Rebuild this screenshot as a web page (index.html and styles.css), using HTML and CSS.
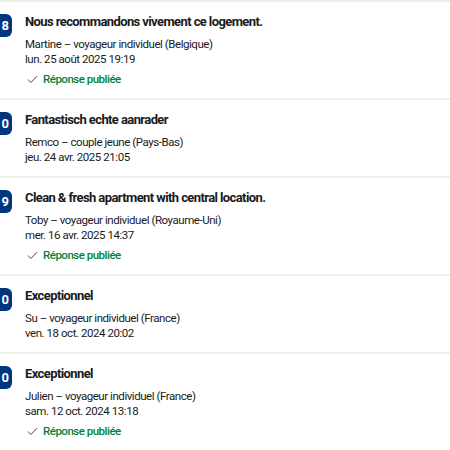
FILE: index.html
```html
<!DOCTYPE html>
<html lang="fr">
<head>
<meta charset="utf-8">
<link rel="stylesheet" href="styles.css">
</head>
<body>
<ul class="reviews">
  <li class="review">
    <div class="score">8</div>
    <div class="body">
      <h3 class="title">Nous recommandons vivement ce logement.</h3>
      <p class="meta">Martine – voyageur individuel (Belgique)</p>
      <p class="meta">lun. 25 août 2025 19:19</p>
      <p class="reply"><svg class="check" viewBox="0 0 11 9" width="11" height="9"><polyline points="1,4.5 4,7.5 10,1.2" fill="none" stroke="#474747" stroke-width="1"/></svg><span>Réponse publiée</span></p>
    </div>
  </li>
  <li class="review">
    <div class="score">10</div>
    <div class="body">
      <h3 class="title">Fantastisch echte aanrader</h3>
      <p class="meta">Remco – couple jeune (Pays-Bas)</p>
      <p class="meta">jeu. 24 avr. 2025 21:05</p>
    </div>
  </li>
  <li class="review">
    <div class="score">9</div>
    <div class="body">
      <h3 class="title">Clean &amp; fresh apartment with central location.</h3>
      <p class="meta">Toby – voyageur individuel (Royaume-Uni)</p>
      <p class="meta">mer. 16 avr. 2025 14:37</p>
      <p class="reply"><svg class="check" viewBox="0 0 11 9" width="11" height="9"><polyline points="1,4.5 4,7.5 10,1.2" fill="none" stroke="#474747" stroke-width="1"/></svg><span>Réponse publiée</span></p>
    </div>
  </li>
  <li class="review">
    <div class="score">10</div>
    <div class="body">
      <h3 class="title">Exceptionnel</h3>
      <p class="meta">Su – voyageur individuel (France)</p>
      <p class="meta">ven. 18 oct. 2024 20:02</p>
    </div>
  </li>
  <li class="review">
    <div class="score">10</div>
    <div class="body">
      <h3 class="title">Exceptionnel</h3>
      <p class="meta">Julien – voyageur individuel (France)</p>
      <p class="meta">sam. 12 oct. 2024 13:18</p>
      <p class="reply"><svg class="check" viewBox="0 0 11 9" width="11" height="9"><polyline points="1,4.5 4,7.5 10,1.2" fill="none" stroke="#474747" stroke-width="1"/></svg><span>Réponse publiée</span></p>
    </div>
  </li>
</ul>
</body>
</html>
```

FILE: styles.css
```css
html, body {
  margin: 0;
  padding: 0;
  background: #ffffff;
}
body {
  font-family: Roboto, "Noto Sans", "Liberation Sans", sans-serif;
  color: #1a1a1a;
  overflow: hidden;
}
.reviews {
  list-style: none;
  margin: 0;
  padding: 0;
  border-top: 2px solid #ececec;
}
.review {
  display: flex;
  align-items: flex-start;
  gap: 13px;
  padding: 10px 0 11px;
  border-bottom: 2px solid #f0f0f0;
}
.score {
  flex: none;
  width: 24px;
  height: 23px;
  margin-left: -12px;
  margin-top: 2px;
  box-sizing: border-box;
  padding-right: 3px;
  background: #003580;
  color: #ffffff;
  border-radius: 6px 6px 6px 0;
  font-size: 13px;
  font-weight: 700;
  line-height: 23px;
  text-align: right;
}
.body {
  flex: 1;
  min-width: 0;
}
.title {
  margin: 0 0 5px;
  font-size: 13px;
  font-weight: 700;
  letter-spacing: -0.6px;
  line-height: 20px;
  color: #1a1a1a;
}
.meta {
  margin: 0;
  font-size: 11.5px;
  letter-spacing: -0.45px;
  line-height: 15px;
  color: #1a1a1a;
}
.reply {
  display: flex;
  align-items: center;
  gap: 5px;
  margin: 4px 0 0;
  padding-left: 2px;
  font-size: 11.5px;
  font-weight: 500;
  letter-spacing: -0.5px;
  line-height: 16px;
  color: #008234;
}
.check {
  flex: none;
}
```
